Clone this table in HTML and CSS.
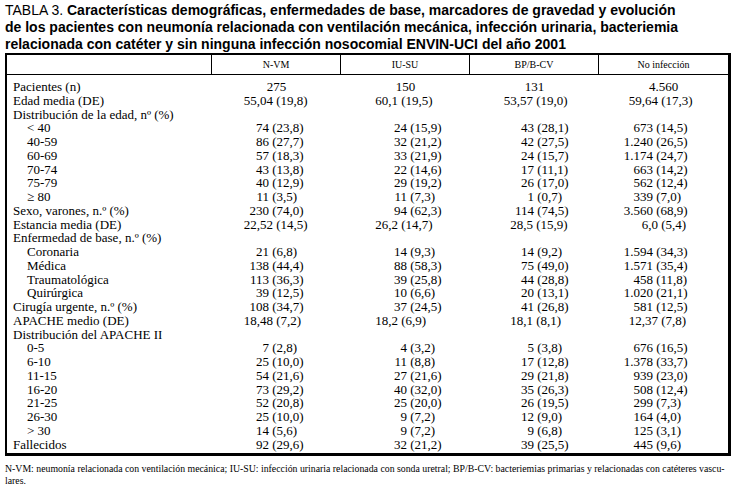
FILE: index.html
```html
<!DOCTYPE html>
<html lang="es">
<head>
<meta charset="utf-8">
<title>Tabla 3</title>
<link rel="stylesheet" href="styles.css">
</head>
<body>
<h1 class="title"><span class="lbl">TABLA 3.</span> Características demográficas, enfermedades de base, marcadores de gravedad y evolución<br>de los pacientes con neumonía relacionada con ventilación mecánica, infección urinaria, bacteriemia<br>relacionada con catéter y sin ninguna infección nosocomial ENVIN-UCI del año 2001</h1>
<div class="tbl">
  <div class="head">
    <div class="hc"></div>
    <div class="hc">N-VM</div>
    <div class="hc">IU-SU</div>
    <div class="hc">BP/B-CV</div>
    <div class="hc">No infección</div>
  </div>
  <div class="body">
    <div class="row center"><div class="lab">Pacientes (n)</div><div class="v c1">275</div><div class="v c2">150</div><div class="v c3">131</div><div class="v c4">4.560</div></div>
    <div class="row"><div class="lab">Edad media (DE)</div><div class="v c1"><span class="n m">55,04</span> (19,8)</div><div class="v c2"><span class="n m">60,1</span> (19,5)</div><div class="v c3"><span class="n m">53,57</span> (19,0)</div><div class="v c4"><span class="n m">59,64</span> (17,3)</div></div>
    <div class="row"><div class="lab">Distribución de la edad, nº (%)</div></div>
    <div class="row"><div class="lab in">&lt; 40</div><div class="v c1"><span class="n">74</span> (23,8)</div><div class="v c2"><span class="n">24</span> (15,9)</div><div class="v c3"><span class="n">43</span> (28,1)</div><div class="v c4"><span class="n">673</span> (14,5)</div></div>
    <div class="row"><div class="lab in">40-59</div><div class="v c1"><span class="n">86</span> (27,7)</div><div class="v c2"><span class="n">32</span> (21,2)</div><div class="v c3"><span class="n">42</span> (27,5)</div><div class="v c4"><span class="n">1.240</span> (26,5)</div></div>
    <div class="row"><div class="lab in">60-69</div><div class="v c1"><span class="n">57</span> (18,3)</div><div class="v c2"><span class="n">33</span> (21,9)</div><div class="v c3"><span class="n">24</span> (15,7)</div><div class="v c4"><span class="n">1.174</span> (24,7)</div></div>
    <div class="row"><div class="lab in">70-74</div><div class="v c1"><span class="n">43</span> (13,8)</div><div class="v c2"><span class="n">22</span> (14,6)</div><div class="v c3"><span class="n">17</span> (11,1)</div><div class="v c4"><span class="n">663</span> (14,2)</div></div>
    <div class="row"><div class="lab in">75-79</div><div class="v c1"><span class="n">40</span> (12,9)</div><div class="v c2"><span class="n">29</span> (19,2)</div><div class="v c3"><span class="n">26</span> (17,0)</div><div class="v c4"><span class="n">562</span> (12,4)</div></div>
    <div class="row"><div class="lab in">≥ 80</div><div class="v c1"><span class="n">11</span> (3,5)</div><div class="v c2"><span class="n">11</span> (7,3)</div><div class="v c3"><span class="n">1</span> (0,7)</div><div class="v c4"><span class="n">339</span> (7,0)</div></div>
    <div class="row"><div class="lab">Sexo, varones, n.º (%)</div><div class="v c1"><span class="n">230</span> (74,0)</div><div class="v c2"><span class="n">94</span> (62,3)</div><div class="v c3"><span class="n">114</span> (74,5)</div><div class="v c4"><span class="n">3.560</span> (68,9)</div></div>
    <div class="row"><div class="lab">Estancia media (DE)</div><div class="v c1"><span class="n m">22,52</span> (14,5)</div><div class="v c2"><span class="n m">26,2</span> (14,7)</div><div class="v c3"><span class="n m">28,5</span> (15,9)</div><div class="v c4"><span class="n m">6,0</span> (5,4)</div></div>
    <div class="row"><div class="lab">Enfermedad de base, n.º (%)</div></div>
    <div class="row"><div class="lab in">Coronaria</div><div class="v c1"><span class="n">21</span> (6,8)</div><div class="v c2"><span class="n">14</span> (9,3)</div><div class="v c3"><span class="n">14</span> (9,2)</div><div class="v c4"><span class="n">1.594</span> (34,3)</div></div>
    <div class="row"><div class="lab in">Médica</div><div class="v c1"><span class="n">138</span> (44,4)</div><div class="v c2"><span class="n">88</span> (58,3)</div><div class="v c3"><span class="n">75</span> (49,0)</div><div class="v c4"><span class="n">1.571</span> (35,4)</div></div>
    <div class="row"><div class="lab in">Traumatológica</div><div class="v c1"><span class="n">113</span> (36,3)</div><div class="v c2"><span class="n">39</span> (25,8)</div><div class="v c3"><span class="n">44</span> (28,8)</div><div class="v c4"><span class="n">458</span> (11,8)</div></div>
    <div class="row"><div class="lab in">Quirúrgica</div><div class="v c1"><span class="n">39</span> (12,5)</div><div class="v c2"><span class="n">10</span> (6,6)</div><div class="v c3"><span class="n">20</span> (13,1)</div><div class="v c4"><span class="n">1.020</span> (21,1)</div></div>
    <div class="row"><div class="lab">Cirugía urgente, n.º (%)</div><div class="v c1"><span class="n">108</span> (34,7)</div><div class="v c2"><span class="n">37</span> (24,5)</div><div class="v c3"><span class="n">41</span> (26,8)</div><div class="v c4"><span class="n">581</span> (12,5)</div></div>
    <div class="row"><div class="lab">APACHE medio (DE)</div><div class="v c1"><span class="n m">18,48</span> (7,2)</div><div class="v c2"><span class="n m">18,2</span> (6,9)</div><div class="v c3"><span class="n m">18,1</span> (8,1)</div><div class="v c4"><span class="n m">12,37</span> (7,8)</div></div>
    <div class="row"><div class="lab">Distribución del APACHE II</div></div>
    <div class="row"><div class="lab in">0-5</div><div class="v c1"><span class="n">7</span> (2,8)</div><div class="v c2"><span class="n">4</span> (3,2)</div><div class="v c3"><span class="n">5</span> (3,8)</div><div class="v c4"><span class="n">676</span> (16,5)</div></div>
    <div class="row"><div class="lab in">6-10</div><div class="v c1"><span class="n">25</span> (10,0)</div><div class="v c2"><span class="n">11</span> (8,8)</div><div class="v c3"><span class="n">17</span> (12,8)</div><div class="v c4"><span class="n">1.378</span> (33,7)</div></div>
    <div class="row"><div class="lab in">11-15</div><div class="v c1"><span class="n">54</span> (21,6)</div><div class="v c2"><span class="n">27</span> (21,6)</div><div class="v c3"><span class="n">29</span> (21,8)</div><div class="v c4"><span class="n">939</span> (23,0)</div></div>
    <div class="row"><div class="lab in">16-20</div><div class="v c1"><span class="n">73</span> (29,2)</div><div class="v c2"><span class="n">40</span> (32,0)</div><div class="v c3"><span class="n">35</span> (26,3)</div><div class="v c4"><span class="n">508</span> (12,4)</div></div>
    <div class="row"><div class="lab in">21-25</div><div class="v c1"><span class="n">52</span> (20,8)</div><div class="v c2"><span class="n">25</span> (20,0)</div><div class="v c3"><span class="n">26</span> (19,5)</div><div class="v c4"><span class="n">299</span> (7,3)</div></div>
    <div class="row"><div class="lab in">26-30</div><div class="v c1"><span class="n">25</span> (10,0)</div><div class="v c2"><span class="n">9</span> (7,2)</div><div class="v c3"><span class="n">12</span> (9,0)</div><div class="v c4"><span class="n">164</span> (4,0)</div></div>
    <div class="row"><div class="lab in">&gt; 30</div><div class="v c1"><span class="n">14</span> (5,6)</div><div class="v c2"><span class="n">9</span> (7,2)</div><div class="v c3"><span class="n">9</span> (6,8)</div><div class="v c4"><span class="n">125</span> (3,1)</div></div>
    <div class="row"><div class="lab">Fallecidos</div><div class="v c1"><span class="n">92</span> (29,6)</div><div class="v c2"><span class="n">32</span> (21,2)</div><div class="v c3"><span class="n">39</span> (25,5)</div><div class="v c4"><span class="n">445</span> (9,6)</div></div>
  </div>
</div>
<p class="foot">N-VM: neumonía relacionada con ventilación mecánica; IU-SU: infección urinaria relacionada con sonda uretral; BP/B-CV: bacteriemias primarias y relacionadas con catéteres vascu-<br>lares.</p>
</body>
</html>
```
FILE: styles.css
```css
html, body {
  margin: 0;
  background: #fff;
  color: #000;
}
body {
  padding: 2px 5px 0 5px;
  font-family: "Liberation Serif", "Times New Roman", serif;
}
.title {
  margin: 0;
  font-family: "Liberation Sans", Arial, sans-serif;
  font-size: 14px;
  line-height: 17px;
  font-weight: bold;
  white-space: nowrap;
}
.title .lbl {
  font-weight: normal;
}
.tbl {
  width: 726px;
  box-sizing: border-box;
  border-style: solid;
  border-color: #000;
  border-width: 2px 3px 3px 2px;
}
.head {
  display: grid;
  grid-template-columns: 205px repeat(4, 129px);
  border-bottom: 1px solid #000;
}
.hc {
  height: 19px;
  box-sizing: border-box;
  border-right: 1px solid #000;
  font-size: 10px;
  display: flex;
  align-items: center;
  justify-content: center;
}
.hc:last-child {
  border-right: none;
}
.body {
  padding: 5px 0 2px 0;
  font-size: 13px;
  line-height: 13.75px;
}
.row {
  display: grid;
  grid-template-columns: 205px repeat(4, 129px);
  height: 13.75px;
  white-space: nowrap;
}
.lab {
  padding-left: 6px;
}
.lab.in {
  padding-left: 20px;
}
.v .n {
  display: inline-block;
  width: 30px;
  text-align: right;
}
.v .n.m {
  margin-left: var(--mo);
}
.c1 { padding-left: 27px; --mo: 4px; }
.c2 { padding-left: 36px; --mo: -9px; }
.c3 { padding-left: 34px; --mo: -1px; }
.c4 { padding-left: 24px; --mo: 5px; }
.row.center .v {
  padding-left: 0;
  text-align: center;
}
.foot {
  margin: 7px 0 0 0;
  font-size: 9.8px;
  line-height: 11.5px;
  white-space: nowrap;
}
```
